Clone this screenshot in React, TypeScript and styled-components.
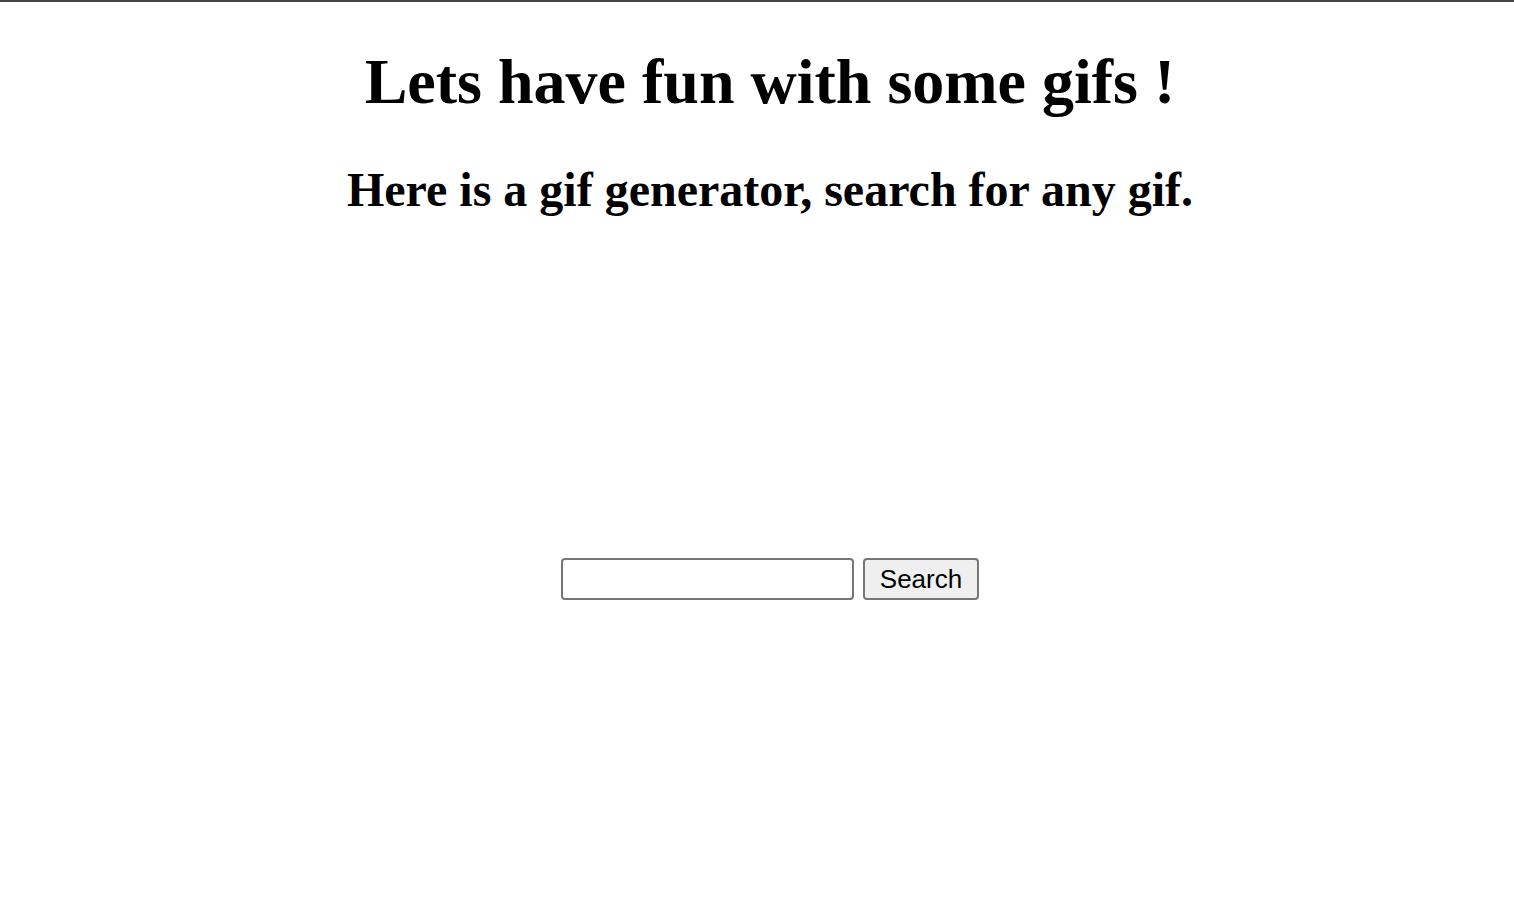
import React from "react";
import styled, { createGlobalStyle } from "styled-components";

const GlobalStyle = createGlobalStyle`
  html, body {
    margin: 0;
    padding: 0;
    background: #ffffff;
  }
  body {
    font-family: "Liberation Serif", "Times New Roman", serif;
    color: #000000;
  }
`;

const Page = styled.div`
  border-top: 2px solid #454545;
  min-height: 912px;
  padding-left: 26px;
  text-align: center;
  font-size: 32px;
  display: flow-root;
`;

const Title = styled.h1`
  font-family: "Liberation Serif", "Times New Roman", serif;
  font-size: 64px;
  font-weight: bold;
  margin: 43px 0;
  line-height: normal;
`;

const Subtitle = styled.h2`
  font-family: "Liberation Serif", "Times New Roman", serif;
  font-size: 48px;
  font-weight: bold;
  margin: 40px 0;
  line-height: normal;
`;

const GifArea = styled.div`
  height: 301px;
`;

const SearchForm = styled.form`
  display: flex;
  justify-content: center;
  align-items: center;
  gap: 9px;
  margin: 0;
`;

const SearchInput = styled.input`
  box-sizing: border-box;
  width: 293px;
  height: 42px;
  border: 2px solid #767676;
  border-radius: 4px;
  padding: 2px 4px;
  font-family: "Liberation Sans", Arial, sans-serif;
  font-size: 26px;
  background: #ffffff;
  outline: none;
`;

const SearchButton = styled.button`
  box-sizing: border-box;
  width: 116px;
  height: 42px;
  border: 2px solid #767676;
  border-radius: 4px;
  background: #efefef;
  padding: 0 12px;
  font-family: "Liberation Sans", Arial, sans-serif;
  font-size: 26px;
  color: #000000;
`;

export default function App() {
  return (
    <>
      <GlobalStyle />
      <Page>
        <Title>Lets have fun with some gifs !</Title>
        <Subtitle>Here is a gif generator, search for any gif.</Subtitle>
        <GifArea />
        <SearchForm onSubmit={(e) => e.preventDefault()}>
          <SearchInput type="text" />
          <SearchButton type="submit">Search</SearchButton>
        </SearchForm>
      </Page>
    </>
  );
}
